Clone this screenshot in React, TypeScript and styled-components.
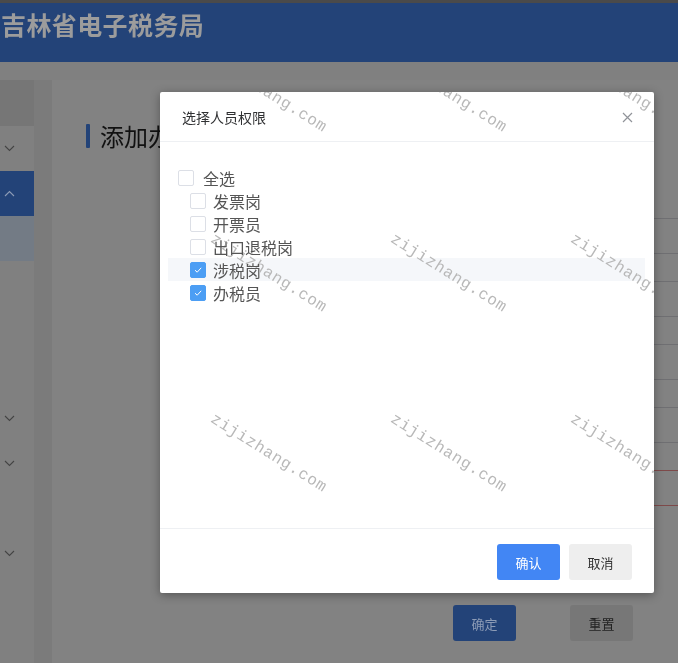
import React from "react";
import styled, { createGlobalStyle } from "styled-components";

const GlobalStyle = createGlobalStyle`
  html, body {
    margin: 0;
    padding: 0;
  }
  body {
    font-family: "Noto Sans CJK SC", "Noto Sans", sans-serif;
  }
`;

const Page = styled.div`
  position: relative;
  width: 678px;
  height: 663px;
  overflow: hidden;
  background-color: #808080;
`;

const TopStrip = styled.div`
  height: 3px;
  background-color: #4a4a4a;
`;

const Header = styled.div`
  height: 59px;
  background-color: #234378;
  padding: 7px 0 0 1px;
  box-sizing: border-box;
`;

const SiteTitle = styled.h1`
  margin: 0;
  font-size: 25px;
  line-height: 28px;
  font-weight: 700;
  letter-spacing: 0.4px;
  color: #9c9c9c;
`;

const Body = styled.div`
  display: flex;
  padding-top: 18px;
  height: 601px;
  box-sizing: border-box;
`;

const Sidebar = styled.div`
  width: 34px;
  display: flex;
  flex-direction: column;
`;

const SideLogo = styled.div`
  height: 46px;
  flex-shrink: 0;
  background-color: #767676;
`;

const SideItem = styled.div<{ $variant?: "active" | "sub" }>`
  height: 45px;
  flex-shrink: 0;
  display: flex;
  align-items: center;
  padding-left: 4px;
  background-color: ${({ $variant }) =>
    $variant === "active" ? "#234378" : $variant === "sub" ? "#737b85" : "transparent"};
`;

const Gutter = styled.div`
  width: 18px;
  background-color: #7b7b7b;
`;

const Content = styled.div`
  flex: 1;
  background-color: #828282;
  padding: 42px 0 0 34px;
  box-sizing: border-box;
  display: flex;
  flex-direction: column;
`;

const PageTitle = styled.div`
  display: flex;
  align-items: center;
  gap: 10px;
  font-size: 24px;
  line-height: 28px;
  color: #111;
  &::before {
    content: "";
    width: 4px;
    height: 24px;
    border-radius: 1px;
    background-color: #234378;
  }
`;

const Form = styled.div`
  margin-top: 68px;
  margin-left: 200px;
  display: flex;
  flex-direction: column;
  gap: 27px;
`;

const FieldBox = styled.div<{ $error?: boolean }>`
  height: 36px;
  box-sizing: border-box;
  border: 1px solid ${({ $error }) => ($error ? "#7e4a4a" : "#6f6f72")};
  border-radius: 3px;
  margin-right: -20px;
`;

const FormActions = styled.div`
  display: flex;
  gap: 54px;
  margin: 99px 0 0 367px;
`;

const PageButton = styled.div<{ $primary?: boolean }>`
  width: 63px;
  height: 36px;
  border-radius: 3px;
  display: flex;
  align-items: center;
  justify-content: center;
  font-size: 13px;
  background-color: ${({ $primary }) => ($primary ? "#234378" : "#777777")};
  color: ${({ $primary }) => ($primary ? "#8d9cb6" : "#222")};
`;

const Modal = styled.div`
  position: absolute;
  left: 160px;
  top: 92px;
  width: 494px;
  height: 501px;
  background-color: #fff;
  border-radius: 2px;
  box-shadow: 0 2px 10px rgba(0, 0, 0, 0.35);
  display: flex;
  flex-direction: column;
  z-index: 2;
`;

const ModalHeader = styled.div`
  display: flex;
  align-items: center;
  justify-content: space-between;
  padding: 16px 21px 15px 22px;
  border-bottom: 1px solid #eef0f3;
`;

const ModalTitle = styled.span`
  font-size: 14px;
  line-height: 18px;
  color: #303133;
`;

const CloseButton = styled.button`
  border: none;
  background: none;
  padding: 0;
  display: flex;
  cursor: pointer;
`;

const ModalBody = styled.div`
  flex: 1;
  padding: 24px 9px 0 8px;
`;

const TreeRow = styled.div<{ $level: number; $current?: boolean }>`
  display: flex;
  align-items: center;
  height: 23px;
  padding-left: ${({ $level }) => 10 + $level * 12}px;
  gap: ${({ $level }) => ($level ? 7 : 9)}px;
  background-color: ${({ $current }) => ($current ? "#f5f7fa" : "transparent")};
`;

const Box = styled.span<{ $checked?: boolean }>`
  width: 16px;
  height: 16px;
  box-sizing: border-box;
  border-radius: 2px;
  border: 1px solid ${({ $checked }) => ($checked ? "#4c9ef4" : "#dcdfe6")};
  background-color: ${({ $checked }) => ($checked ? "#4c9ef4" : "#fff")};
  display: flex;
  align-items: center;
  justify-content: center;
`;

const TreeLabel = styled.span`
  font-size: 16px;
  line-height: 20px;
  color: #555;
`;

const ModalFooter = styled.div`
  display: flex;
  justify-content: flex-end;
  gap: 9px;
  padding: 15px 22px 13px;
  border-top: 1px solid #eef0f3;
`;

const DialogButton = styled.button<{ $primary?: boolean }>`
  width: 63px;
  height: 36px;
  border: none;
  border-radius: 3px;
  font-family: inherit;
  font-size: 13px;
  background-color: ${({ $primary }) => ($primary ? "#4286f4" : "#eeeeee")};
  color: ${({ $primary }) => ($primary ? "#fff" : "#333")};
`;

const Watermark = styled.div`
  position: absolute;
  inset: 0;
  pointer-events: none;
  z-index: 3;
  display: grid;
  grid-template-columns: repeat(4, 180px);
  grid-auto-rows: 180px;
  padding: 51px 0 0 36px;
  mix-blend-mode: darken;
`;

const Mark = styled.span`
  display: block;
  width: 0;
  height: 0;
  white-space: nowrap;
  font-family: "Liberation Mono", monospace;
  font-size: 16px;
  line-height: 16px;
  letter-spacing: 0.7px;
  color: #b8b8b8;
  transform: rotate(32deg);
  transform-origin: 0 0;
`;

const Chevron = ({ up }: { up?: boolean }) => (
  <svg width="11" height="7" viewBox="0 0 11 7">
    <polyline
      points={up ? "1,6 5.5,1.5 10,6" : "1,1 5.5,5.5 10,1"}
      fill="none"
      stroke={up ? "#8d9cb6" : "#444"}
      strokeWidth="1.1"
    />
  </svg>
);

const Check = () => (
  <svg width="10" height="8" viewBox="0 0 10 8">
    <polyline points="2,4.2 4.2,6.2 8.2,1.8" fill="none" stroke="#fff" strokeWidth="1" />
  </svg>
);

const sideItems: { variant?: "active" | "sub"; chevron?: "up" | "down" }[] = [
  { chevron: "down" },
  { variant: "active", chevron: "up" },
  { variant: "sub" },
  {},
  {},
  {},
  { chevron: "down" },
  { chevron: "down" },
  {},
  { chevron: "down" },
];

const roles = [
  { label: "发票岗", checked: false },
  { label: "开票员", checked: false },
  { label: "出口退税岗", checked: false },
  { label: "涉税岗", checked: true, current: true },
  { label: "办税员", checked: true },
];

export default function App() {
  return (
    <Page>
      <GlobalStyle />
      <TopStrip />
      <Header>
        <SiteTitle>吉林省电子税务局</SiteTitle>
      </Header>
      <Body>
        <Sidebar>
          <SideLogo />
          {sideItems.map((item, id) => (
            <SideItem key={`side-${id}`} $variant={item.variant}>
              {item.chevron && <Chevron up={item.chevron === "up"} />}
            </SideItem>
          ))}
        </Sidebar>
        <Gutter />
        <Content>
          <PageTitle>添加办税员</PageTitle>
          <Form>
            {[0, 1, 2, 3, 4].map((i) => (
              <FieldBox key={`field-${i}`} $error={i === 4} />
            ))}
          </Form>
          <FormActions>
            <PageButton $primary>确定</PageButton>
            <PageButton>重置</PageButton>
          </FormActions>
        </Content>
      </Body>

      <Modal>
        <ModalHeader>
          <ModalTitle>选择人员权限</ModalTitle>
          <CloseButton>
            <svg width="11" height="11" viewBox="0 0 11 11">
              <path d="M1 1L10 10M10 1L1 10" stroke="#909399" strokeWidth="1.2" />
            </svg>
          </CloseButton>
        </ModalHeader>
        <ModalBody>
          <TreeRow $level={0}>
            <Box />
            <TreeLabel>全选</TreeLabel>
          </TreeRow>
          {roles.map((role) => (
            <TreeRow key={role.label} $level={1} $current={role.current}>
              <Box $checked={role.checked}>{role.checked && <Check />}</Box>
              <TreeLabel>{role.label}</TreeLabel>
            </TreeRow>
          ))}
        </ModalBody>
        <ModalFooter>
          <DialogButton $primary>确认</DialogButton>
          <DialogButton>取消</DialogButton>
        </ModalFooter>
      </Modal>

      <Watermark>
        {Array.from({ length: 16 }).map((_, id) => (
          <div key={`wm-${id}`}>
            <Mark>zijizhang.com</Mark>
          </div>
        ))}
      </Watermark>
    </Page>
  );
}
